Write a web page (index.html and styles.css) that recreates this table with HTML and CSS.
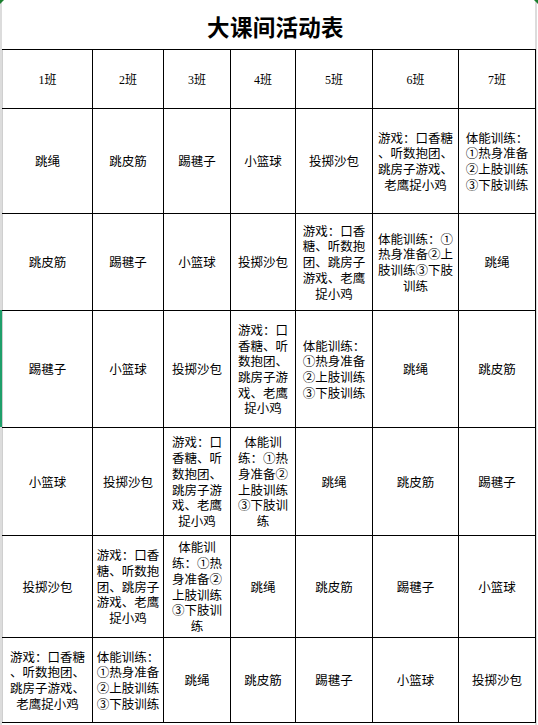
FILE: index.html
```html
<!DOCTYPE html>
<html lang="zh-CN">
<head>
<meta charset="utf-8">
<title>大课间活动表</title>
<link rel="stylesheet" href="styles.css">
</head>
<body>
<div class="sheet">
  <span class="mark mark-left"></span>
  <span class="mark mark-right"></span>
  <h1 class="title">大课间活动表</h1>
  <table class="schedule">
    <colgroup>
      <col class="c1"><col class="c2"><col class="c3"><col class="c4"><col class="c5"><col class="c6"><col class="c7">
    </colgroup>
    <thead>
      <tr class="r0">
        <th>1班</th><th>2班</th><th>3班</th><th>4班</th><th>5班</th><th>6班</th><th>7班</th>
      </tr>
    </thead>
    <tbody>
      <tr class="r1">
        <td>跳绳</td>
        <td>跳皮筋</td>
        <td>踢毽子</td>
        <td>小篮球</td>
        <td>投掷沙包</td>
        <td>游戏：口香糖<br>、听数抱团、<br>跳房子游戏、<br>老鹰捉小鸡</td>
        <td>体能训练：<br>①热身准备<br>②上肢训练<br>③下肢训练</td>
      </tr>
      <tr class="r2">
        <td>跳皮筋</td>
        <td>踢毽子</td>
        <td>小篮球</td>
        <td>投掷沙包</td>
        <td>游戏：口香<br>糖、听数抱<br>团、跳房子<br>游戏、老鹰<br>捉小鸡</td>
        <td>体能训练：①<br>热身准备②上<br>肢训练③下肢<br>训练</td>
        <td>跳绳</td>
      </tr>
      <tr class="r3">
        <td>踢毽子</td>
        <td>小篮球</td>
        <td>投掷沙包</td>
        <td>游戏：口<br>香糖、听<br>数抱团、<br>跳房子游<br>戏、老鹰<br>捉小鸡</td>
        <td>体能训练：<br>①热身准备<br>②上肢训练<br>③下肢训练</td>
        <td>跳绳</td>
        <td>跳皮筋</td>
      </tr>
      <tr class="r4">
        <td>小篮球</td>
        <td>投掷沙包</td>
        <td>游戏：口<br>香糖、听<br>数抱团、<br>跳房子游<br>戏、老鹰<br>捉小鸡</td>
        <td>体能训<br>练：①热<br>身准备②<br>上肢训练<br>③下肢训<br>练</td>
        <td>跳绳</td>
        <td>跳皮筋</td>
        <td>踢毽子</td>
      </tr>
      <tr class="r5">
        <td>投掷沙包</td>
        <td>游戏：口香<br>糖、听数抱<br>团、跳房子<br>游戏、老鹰<br>捉小鸡</td>
        <td>体能训<br>练：①热<br>身准备②<br>上肢训练<br>③下肢训<br>练</td>
        <td>跳绳</td>
        <td>跳皮筋</td>
        <td>踢毽子</td>
        <td>小篮球</td>
      </tr>
      <tr class="r6">
        <td>游戏：口香糖<br>、听数抱团、<br>跳房子游戏、<br>老鹰捉小鸡</td>
        <td>体能训练：<br>①热身准备<br>②上肢训练<br>③下肢训练</td>
        <td>跳绳</td>
        <td>跳皮筋</td>
        <td>踢毽子</td>
        <td>小篮球</td>
        <td>投掷沙包</td>
      </tr>
    </tbody>
  </table>
</div>
</body>
</html>
```

FILE: styles.css
```css
html, body {
  margin: 0;
  padding: 0;
  background: #ffffff;
}

body {
  font-family: "Noto Sans CJK SC", "Noto Sans", sans-serif;
  color: #000000;
}

.sheet {
  position: relative;
  width: 533px;
  min-height: 725px;
  padding-left: 2px;
  border-right: 2px solid #dcdcdc;
  background: linear-gradient(to bottom,
      #dcdcdc 0, #dcdcdc 310px,
      #1e9f6a 310px, #1e9f6a 427px,
      #dcdcdc 427px, #dcdcdc 100%) no-repeat left top / 2px 100%;
  box-sizing: content-box;
}

.mark {
  position: absolute;
  top: 0;
  width: 0;
  height: 0;
}

.mark-left {
  left: 0;
  border-top: 4px solid #1a7f2e;
  border-right: 4px solid transparent;
}

.mark-right {
  right: -3px;
  border-top: 4px solid #1a7f2e;
  border-left: 4px solid transparent;
}

.title {
  margin: 0;
  height: 49px;
  line-height: 52px;
  padding-left: 14px;
  text-align: center;
  font-family: "Noto Sans CJK SC", sans-serif;
  font-size: 22.5px;
  font-weight: 700;
  letter-spacing: 0.3px;
}

.schedule {
  width: 533px;
  table-layout: fixed;
  border-collapse: collapse;
}

.c1 { width: 90px; }
.c2 { width: 71px; }
.c3 { width: 67px; }
.c4 { width: 65px; }
.c5 { width: 77px; }
.c6 { width: 86px; }
.c7 { width: 77px; }

.schedule th,
.schedule td {
  border: 1px solid #000000;
  padding: 0;
  text-align: center;
  vertical-align: middle;
  white-space: nowrap;
  overflow: hidden;
  text-spacing-trim: space-all;
}

.schedule th {
  font-family: "Liberation Serif", "Noto Sans CJK SC", serif;
  font-size: 12px;
  font-weight: 400;
}

.schedule td {
  font-size: 12.5px;
  line-height: 15.7px;
}

.schedule th:first-child,
.schedule td:first-child {
  border-left-color: #cfcfcf;
}

.r0 { height: 59px; }
.r1 { height: 105px; }
.r2 { height: 97px; }
.r3 { height: 117px; }
.r4 { height: 108px; }
.r5 { height: 102px; }
.r6 { height: 85px; }
```
